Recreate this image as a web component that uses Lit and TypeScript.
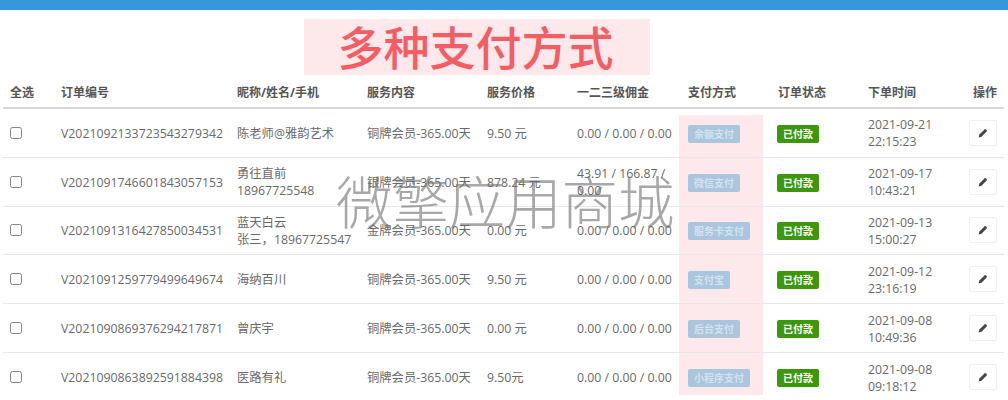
import { LitElement, html, css } from "lit";
import { customElement } from "lit/decorators.js";

interface Order {
  id: string;
  name: string[];
  service: string;
  price: string;
  commission: string;
  pay: string;
  date: string;
  time: string;
}

const ORDERS: Order[] = [
  { id: "V2021092133723543279342", name: ["陈老师@雅韵艺术"], service: "铜牌会员-365.00天", price: "9.50 元", commission: "0.00 / 0.00 / 0.00", pay: "余额支付", date: "2021-09-21", time: "22:15:23" },
  { id: "V2021091746601843057153", name: ["勇往直前", "18967725548"], service: "银牌会员-365.00天", price: "878.24 元", commission: "43.91 / 166.87 / 0.00", pay: "微信支付", date: "2021-09-17", time: "10:43:21" },
  { id: "V2021091316427850034531", name: ["蓝天白云", "张三，18967725547"], service: "金牌会员-365.00天", price: "0.00 元", commission: "0.00 / 0.00 / 0.00", pay: "服务卡支付", date: "2021-09-13", time: "15:00:27" },
  { id: "V2021091259779499649674", name: ["海纳百川"], service: "铜牌会员-365.00天", price: "9.50 元", commission: "0.00 / 0.00 / 0.00", pay: "支付宝", date: "2021-09-12", time: "23:16:19" },
  { id: "V2021090869376294217871", name: ["曾庆宇"], service: "铜牌会员-365.00天", price: "0.00 元", commission: "0.00 / 0.00 / 0.00", pay: "后台支付", date: "2021-09-08", time: "10:49:36" },
  { id: "V2021090863892591884398", name: ["医路有礼"], service: "铜牌会员-365.00天", price: "9.50元", commission: "0.00 / 0.00 / 0.00", pay: "小程序支付", date: "2021-09-08", time: "09:18:12" },
];

const HEADERS = ["全选", "订单编号", "昵称/姓名/手机", "服务内容", "服务价格", "一二三级佣金", "支付方式", "订单状态", "下单时间", "操作"];

@customElement("app-root")
export class AppRoot extends LitElement {
  static styles = css`
    :host {
      display: block;
      position: relative;
      width: 1008px;
      height: 400px;
      overflow: hidden;
      background: #fff;
      font-family: "Open Sans", "Noto Sans CJK SC", sans-serif;
      font-size: 12.3px;
      line-height: 17px;
      color: #676a6c;
    }
    .topbar { height: 10px; background: #3498db; }
    .banner {
      width: 346px;
      height: 56px;
      margin: 9px 0 0 304px;
      padding-right: 3px;
      box-sizing: border-box;
      background: #fde8ec;
      color: #f45d63;
      font-family: "Noto Sans CJK SC", sans-serif;
      font-size: 46px;
      font-weight: 500;
      line-height: 52px;
      text-align: center;
    }
    .table { position: relative; margin: 0 3px; width: 1001px; }
    .row {
      position: relative;
      display: grid;
      grid-template-columns: 51px 176px 130px 120px 90px 111px 90px 90px 105px 38px;
      align-items: center;
      height: 48.8px;
      padding-top: 1px;
      box-sizing: border-box;
      border-bottom: 1px solid #e7e7e7;
    }
    .row:last-child { border-bottom: none; }
    .row.head {
      height: 34px;
      padding-top: 2px;
      border-bottom: 2px solid #d9d9d9;
      font-weight: 700;
      font-size: 12px;
      color: #555;
    }
    .cell { padding-left: 7px; min-width: 0; }
    .commission { padding-right: 4px; }
    .pink {
      position: absolute;
      left: 676px;
      top: 40px;
      width: 84px;
      height: 280px;
      background: #fde8ec;
    }
    .badge {
      display: inline-block;
      height: 18px;
      padding: 0 6px;
      border-radius: 2px;
      font-family: "Noto Sans CJK SC", sans-serif;
      font-size: 10px;
      font-weight: 700;
      line-height: 18px;
      color: #fff;
      vertical-align: middle;
    }
    .pay { background: #a9c6de; color: #d4e2ee; }
    .status { background: #3c970a; margin-left: -1px; }
    input {
      appearance: none;
      display: block;
      width: 12px;
      height: 12px;
      margin: -1px 0 0 -0.5px;
      border: 1px solid #858585;
      border-radius: 2.5px;
      background: #fff;
      box-sizing: border-box;
    }
    .edit {
      display: flex;
      align-items: center;
      justify-content: center;
      width: 28px;
      height: 26px;
      margin: -1px 0 0 -4px;
      padding: 0;
      box-sizing: border-box;
      border: 1px solid #eef0f1;
      border-radius: 2px;
      background: #fff;
    }
    .edit svg { width: 10px; height: 10px; display: block; fill: #45454d; }
    .watermark {
      position: absolute;
      left: 336px;
      top: 172px;
      font-family: "Noto Sans CJK SC", sans-serif;
      font-weight: 300;
      font-size: 56.4px;
      line-height: 56px;
      white-space: nowrap;
      color: rgba(110, 110, 110, 0.6);
      pointer-events: none;
    }
  `;

  private renderRow(o: Order) {
    return html`
      <div class="row">
        <div class="cell"><input type="checkbox" /></div>
        <div class="cell">${o.id}</div>
        <div class="cell">${o.name.map((n) => html`<div>${n}</div>`)}</div>
        <div class="cell">${o.service}</div>
        <div class="cell">${o.price}</div>
        <div class="cell commission">${o.commission}</div>
        <div class="cell"><span class="badge pay">${o.pay}</span></div>
        <div class="cell"><span class="badge status">已付款</span></div>
        <div class="cell"><div>${o.date}</div><div>${o.time}</div></div>
        <div class="cell">
          <button class="edit" aria-label="编辑">
            <svg viewBox="0 0 16 16"><path d="M1 15l1.2-4.6L10.8 1.8a1 1 0 0 1 1.4 0l2 2a1 1 0 0 1 0 1.4L5.6 13.8z" /></svg>
          </button>
        </div>
      </div>
    `;
  }

  render() {
    return html`
      <div class="topbar"></div>
      <div class="banner">多种支付方式</div>
      <div class="table">
        <div class="pink"></div>
        <div class="row head">${HEADERS.map((h) => html`<div class="cell">${h}</div>`)}</div>
        ${ORDERS.map((o) => this.renderRow(o))}
      </div>
      <div class="watermark">微擎应用商城</div>
    `;
  }
}
